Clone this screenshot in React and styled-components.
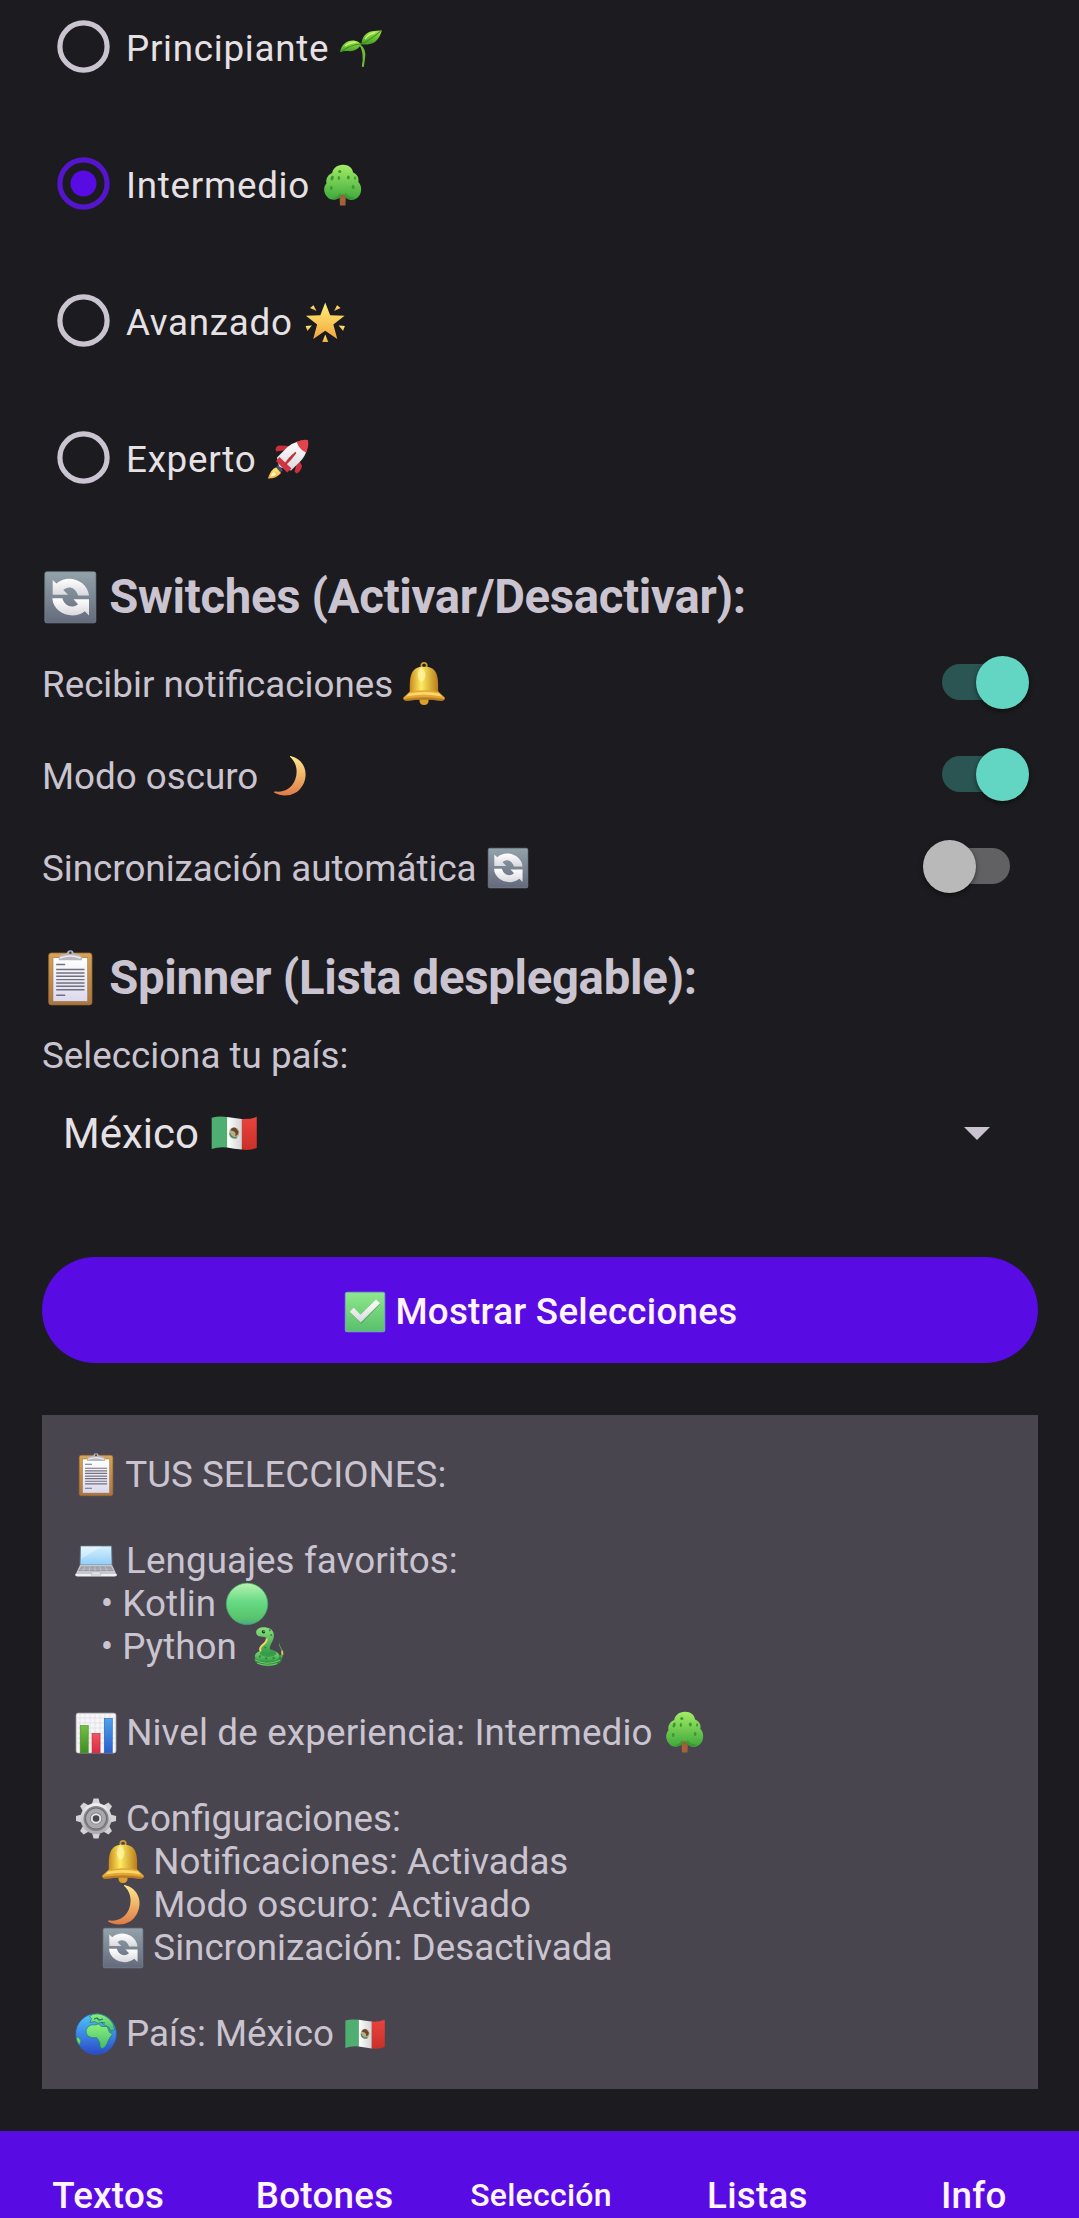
import React, { useState } from "react";
import styled, { createGlobalStyle, css } from "styled-components";

const color = {
  background: "#1c1b1f",
  card: "#49454f",
  primary: "#580be2",
  onPrimary: "#fff4ff",
  text: "#cac4d0",
  textStrong: "#e6e1e5",
  teal: "#62d6c3",
  tealTrack: "#2b5552",
  greyThumb: "#b9b9b9",
  greyTrack: "#616063",
};

const GlobalStyle = createGlobalStyle`
  *, *::before, *::after { box-sizing: border-box; }
  body {
    margin: 0;
    background: ${color.background};
    color: ${color.text};
    font-family: Roboto, "Noto Sans", sans-serif;
    font-size: 36.75px;
    line-height: 43px;
    overflow: hidden;
  }
  button { font: inherit; border: 0; cursor: pointer; }
`;

/* ---------- Emoji drawings, all on a 44 x 44 grid ---------- */

const EmojiSvg = styled.svg`
  display: inline-block;
  width: 1.2em;
  height: 1.2em;
  margin: -0.25em -0.02em -0.27em 0;
  overflow: visible;
`;

const GradientStore = styled.svg`
  position: absolute;
  width: 0;
  height: 0;
`;

const gradients = {
  leaf: ["#a5e84f", "#3f9c22"],
  tree: ["#a4ec66", "#3da83b"],
  star: ["#fff27a", "#f3a63c"],
  slate: ["#93a2ab", "#646a7c"],
  white: ["#ffffff", "#d9d8dd"],
  moon: ["#ffe98a", "#df7b45"],
  wood: ["#d9a456", "#a8753f"],
  paper: ["#ffffff", "#dcd8ee"],
  check: ["#8fe88c", "#57bf6b"],
  screen: ["#d8f1ff", "#8fcdf8"],
  snake: ["#8ae07c", "#2f9a47"],
  barGreen: ["#72c043", "#3f8c22"],
  barRed: ["#f4545c", "#d92c4a"],
  barBlue: ["#4da3ea", "#2a5fd0"],
  gear: ["#f1f1f2", "#a9a9ae"],
  sea: ["#4fc7fb", "#2a49c8"],
  land: ["#8df07c", "#43b96f"],
  flagRed: ["#e9433c", "#c93029"],
};

function Gradients() {
  return (
    <GradientStore aria-hidden="true">
      <defs>
        {Object.entries(gradients).map(([id, [top, bottom]]) => (
          <linearGradient key={id} id={`g-${id}`} x1="0" y1="0" x2="0" y2="1">
            <stop offset="0" stopColor={top} />
            <stop offset="1" stopColor={bottom} />
          </linearGradient>
        ))}
        <linearGradient id="g-circle" x1="0" y1="0" x2="0" y2="1">
          <stop offset="0" stopColor="#b8f3b2" />
          <stop offset="0.45" stopColor="#66da84" />
          <stop offset="0.85" stopColor="#57c46c" />
          <stop offset="1" stopColor="#48a88c" />
        </linearGradient>
        <linearGradient id="g-flagWhite">
          <stop offset="0" stopColor="#ffffff" />
          <stop offset="1" stopColor="#d4d2d4" />
        </linearGradient>
        <linearGradient id="g-bell">
          <stop offset="0" stopColor="#c98a1c" />
          <stop offset="0.4" stopColor="#ffec62" />
          <stop offset="1" stopColor="#b87b18" />
        </linearGradient>
      </defs>
    </GradientStore>
  );
}

const fill = (id) => `url(#g-${id})`;

const drawings = {
  seedling: (
    <>
      <path d="M21 17.2Q27.6 22 26 31L24.8 39.6Q23.4 40.4 22.8 39.2Q25.4 26 20.4 18Z" fill="#6fbd35" />
      <path d="M1 25.3C2 17.500 8 13 15 13.500Q19 13.700 22 17C20 22 14.500 24.800 9 24Q4.500 23.500 1 25.300Z" fill={fill("leaf")} />
      <path d="M22.500 17.300C22.500 10 27 5.200 33 4.200Q38 3.300 42.700 3.400C41.500 8 38.500 15 32 16.700Q27 18 22.500 17.300Z" fill={fill("leaf")} />
      <path d="M2 24.500Q11 18 22 17Q31 13.500 41.500 4.200" fill="none" stroke="#3f8f20" strokeWidth="1" />
      <path d="M6 19Q11 15 17 15.200M26 12Q29 7 36 5.500" fill="none" stroke="#c7f47a" strokeWidth="1.400" />
    </>
  ),
  tree: (
    <g transform="translate(1.700 0) scale(.95 1)">
      <path d="M18.500 28H25.500L25 41.500H19.200Z" fill="#a4603a" />
      <path d="M22 .8C28 .6 32.500 4 33 8.500C37.500 10.200 39.500 14 38.500 18C42.500 21.500 42.300 29 38.800 32.500C35.500 36.500 29 37 25.800 34L22 29.500L18.400 34C14 37 8 36 5.500 32.500C1.800 28.500 1.700 22.500 5 19.500C4 15 6.500 10.500 11 9C12 3.800 16.500 1 22 .8Z" fill={fill("tree")} />
      <path d="M12 34Q16 34 19 29L22 33L25 29Q29 34 35 33Q30 38 25.500 34L22 31L18.500 34Q15 36 12 34Z" fill="#34862c" opacity=".5" />
      <g fill="#3e9a2f">
        <ellipse cx="19" cy="7.500" rx="1.700" ry="1.500" />
        <ellipse cx="11" cy="14" rx="1.600" ry="2.500" transform="rotate(20 11 14)" />
        <ellipse cx="28" cy="13.500" rx="1.500" ry="2" />
        <ellipse cx="18" cy="14" rx="1.200" ry="2" />
        <ellipse cx="33" cy="23" rx="1.500" ry="2" />
        <ellipse cx="10" cy="24" rx="1.500" ry="2" />
        <ellipse cx="35" cy="14" rx="1" ry="1.700" />
      </g>
    </g>
  ),
  star: (
    <>
      <path d="M22.200 1.400L27.100 14.200L41.500 14.600L30.300 23.500L34.200 37.800L22.200 29.700L10.200 37.800L14.100 23.500L2.900 14.600L17.300 14.200Z" fill={fill("star")} />
      <g fill={fill("star")}>
        <path d="M7 7L10.500 4.200L13.500 10Z" />
        <path d="M37.500 7L34 4.200L31 10Z" />
        <path d="M2.600 25L8.800 24.400L4.400 30Z" />
        <path d="M41.800 25L35.600 24.400L40 30Z" />
        <path d="M22.200 33.500L25.200 41H19.200Z" />
      </g>
    </>
  ),
  rocket: (
    <>
      <path d="M21 12L10 13.500Q8.500 8.500 13 7.500L25 8Z" fill="#c8303e" />
      <path d="M33 22L36 28Q34.500 34 30.500 35.500L28.500 33.500L31 24Z" fill="#c8303e" />
      <path d="M11 19.500L21 9.500Q26 5 32 3.500L40.500 12Q39.500 17.500 35 22.500L25 32.500L13 29Z" fill={fill("white")} />
      <path d="M30.500 3.800Q37 1 41.800 2Q43.200 8 40 14.500Q33.500 12 30.500 3.800Z" fill="#e2434c" />
      <path d="M13.500 19L25.500 30.500L21 34.500L10 23Z" fill="#d23443" />
      <path d="M12 27L17 32L14.500 34.500L9.500 30Z" fill="#4c4c68" />
      <path d="M10 29.500Q5 31 1.800 40.500Q10 41 15 35Z" fill={fill("star")} />
      <path d="M7.500 34Q5.500 35.500 4.200 38.600Q8 38.600 10.500 36.500Z" fill="#fff7c8" />
      <path d="M18 26.500Q22 19.500 29.500 13.800Q30.500 14 30 15.500Q25.500 22 19.500 27.500Q17.500 28.500 18 26.500Z" fill="#c1343e" />
    </>
  ),
  refresh: (
    <>
      <rect x="2.200" y="2.200" width="39.600" height="39.600" rx="1.500" fill={fill("slate")} stroke="#78868f" strokeWidth=".6" />
      <path d="M8.300 8.500V20H20.300L16.500 16.300C20.500 12.700 25.800 14 28 20.500H36.500C35.500 9 20 3.200 11.200 11.200Z" fill={fill("white")} />
      <path d="M36.500 36V23.500H24.500L28 27.300C24 30.800 17.800 29.500 15.800 22.800H8C8.600 34.500 24 40.200 33.200 32.800Z" fill={fill("white")} />
    </>
  ),
  bell: (
    <>
      <circle cx="22" cy="3.600" r="2.700" fill="none" stroke="#cf9b37" strokeWidth="1.700" />
      <path d="M17.500 37H26.500Q27 43 22 43Q17 43 17.500 37Z" fill="#dba030" />
      <path d="M7.800 30C8 20 6.500 6.500 19 4.800H25C37.500 6.500 36 20 36.200 30Z" fill={fill("bell")} />
      <path d="M7.600 29.800Q22 26.500 36.400 29.800L42.600 35.500Q43.500 38.500 39 38.700Q22 36 5 38.700Q.5 38.500 1.400 35.500Z" fill="#e3a633" />
      <path d="M7 31.500Q22 28 37 31.500L40 34.500Q22 31 4 34.500Z" fill="#ffe376" opacity=".8" />
      <path d="M2 37Q22 33.500 42 37Q42 39 39 38.800Q22 36.500 5 38.800Q2 39 2 37Z" fill="#a66c22" opacity=".7" />
      <ellipse cx="19.500" cy="13" rx="3.800" ry="6.500" fill="#fff9b0" opacity=".65" />
    </>
  ),
  moon: (
    <path d="M23.500 2C37 5 42.500 19 35.500 31.500C29.500 42 16.500 44 7 38.500Q6.500 37.200 8.500 37.500C18 38.500 25.500 33.500 28.300 25C31.200 16 29 8.500 23 2.800Q22.500 1.900 23.500 2Z" fill={fill("moon")} />
  ),
  clipboard: (
    <>
      <rect x="5.200" y="2.300" width="33.600" height="40.300" rx="2" fill={fill("wood")} stroke="#9b6a34" strokeWidth=".6" />
      <rect x="8.500" y="6" width="27" height="34" fill={fill("paper")} stroke="#9d7445" strokeWidth=".5" />
      <path d="M13 8V5.800Q14 3.500 17.500 3.200L19.500 2.500Q19.500 .2 22 .2Q24.500 .2 24.500 2.500L26.500 3.200Q30 3.500 31 5.800V8Z" fill="#b7b7bd" />
      <path d="M14 6.200Q22 3 30 6.200" fill="none" stroke="#ececf0" strokeWidth="1.200" />
      <circle cx="22" cy="2.200" r="1" fill="#44424c" />
      <g stroke="#71717e" strokeWidth="1.150">
        <path d="M11 11.200H18M11 15.200H33M11 17.800H33M11 20.400H33M11 23H33M11 25.600H33M11 28.200H33M11 30.800H33M11 35.200H18" />
      </g>
    </>
  ),
  flag: (
    <g transform="translate(.900 .600) scale(.96 .94)">
      <path d="M1.500 8.500Q8 6.500 15.500 7.700V36Q8 35 1.500 37.500Z" fill="#4fae72" />
      <path d="M15.500 7.700Q22 8.800 29 9.500V38Q22 37.200 15.500 36Z" fill={fill("flagWhite")} />
      <path d="M29 9.500Q36 10 42.500 7.600V36.500Q36 39 29 38Z" fill={fill("flagRed")} />
      <ellipse cx="22" cy="22.500" rx="4.600" ry="5.300" fill="#b9ad86" />
      <path d="M18.500 20Q20 16.500 23.500 18L26 21.500Q25.500 25 22.800 25.500Q24 22 21.500 21Z" fill="#68452d" />
      <path d="M18 23Q19.500 28 24.500 26.800" fill="none" stroke="#4f8c67" strokeWidth="1.500" />
    </g>
  ),
  check: (
    <>
      <rect x="2.300" y="2.300" width="39.400" height="39.400" rx="2" fill={fill("check")} stroke="#78a8c8" strokeWidth="1" />
      <path d="M7.500 22.800L11.300 19.200L17.800 26L33.700 10.200L37.300 14L18.200 33.600Z" fill="#3a9550" opacity=".6" />
      <path d="M6.700 21.600L10.700 17.800L17.500 24.600L33 9.500L37 13.200L17.700 32.500Z" fill={fill("white")} />
    </>
  ),
  laptop: (
    <>
      <path d="M6.500 7H37.500L38 26H6Z" fill={fill("screen")} stroke="#69747f" strokeWidth=".8" />
      <path d="M7 7.500H28L7 20Z" fill="#fff" opacity=".35" />
      <path d="M6 26H38L42.500 35.500H1.500Z" fill="#c7c7ce" />
      <path d="M7 27.500H37L39.500 32H4.500Z" fill="#8d8d98" />
      <path d="M6.500 29H37.500M5.500 30.700H38.500M11 27.500L9 32M16 27.500L15 32M21 27.500V32M26 27.500L27 32M31 27.500L33 32" fill="none" stroke="#d3d3da" strokeWidth=".6" />
      <path d="M1.300 35H42.700V36.500Q42 37.500 40 37.500H4Q2 37.500 1.300 36.500Z" fill="#efeff2" />
      <path d="M18 32.800H26L27 36H17Z" fill="#e2e2e7" stroke="#a2a2aa" strokeWidth=".5" />
    </>
  ),
  circle: <circle cx="22" cy="21.800" r="20.700" fill={fill("circle")} stroke="#45a868" strokeWidth=".7" />,
  snake: (
    <g transform="translate(2 1.500) scale(.91 .95)">
      <path d="M30 33Q39 31 36.500 24.500Q33.500 20 34 17Q35.500 21.500 38 25Q40 31 35 36Z" fill="#4cae52" />
      <path d="M36.500 25L38.500 26L38.700 30L36.500 29Z" fill="#e9c558" />
      <ellipse cx="22" cy="34.500" rx="15" ry="7.300" fill="#2f8c3f" />
      <ellipse cx="21" cy="31" rx="13.500" ry="6.500" fill={fill("snake")} />
      <ellipse cx="22" cy="28" rx="9" ry="4" fill="#3b9c46" />
      <path d="M9 7C8 2 15 0 20 1C29 2 30 10 26.500 16C23.500 21 22.500 25 27 28C22 31.500 13 28 12.500 24C12.500 19 21 16 20.500 12.500Q19 10.500 14 10.500Q9.500 10 9 7Z" fill={fill("snake")} />
      <path d="M20.500 12.500Q21 16 16 19.500Q12 23 14 26" fill="none" stroke="#f0d361" strokeWidth="2.200" />
      <circle cx="17" cy="5.500" r="1.900" fill="#173d24" />
      <circle cx="17.500" cy="4.900" r=".6" fill="#fff" />
      <path d="M8 35Q20 42 35 35.500M10 38.500Q21 42.500 32 39" fill="none" stroke="#81cf6f" strokeWidth="1" />
      <g fill="#2c8640">
        <circle cx="24" cy="4" r="1.100" />
        <circle cx="25.500" cy="9" r="1.100" />
        <circle cx="19" cy="22" r="1.100" />
        <circle cx="13" cy="31.500" r="1.200" />
        <circle cx="20" cy="33.500" r="1.200" />
        <circle cx="28" cy="33" r="1.200" />
      </g>
    </g>
  ),
  chart: (
    <>
      <rect x="2.200" y="2.200" width="39.600" height="39.600" rx="2" fill="#f6f6f8" stroke="#c9c8cd" strokeWidth=".8" />
      <path d="M6 2V42M11 2V42M16 2V42M21 2V42M26 2V42M31 2V42M36 2V42M2 7H42M2 12H42M2 17H42M2 22H42M2 27H42M2 32H42" stroke="#d9d9df" strokeWidth=".6" />
      <rect x="6.200" y="14.500" width="8" height="27.300" fill={fill("barGreen")} stroke="#4a8a2a" strokeWidth=".6" />
      <rect x="18" y="22.500" width="8" height="19.300" fill={fill("barRed")} stroke="#b02840" strokeWidth=".6" />
      <rect x="30.200" y="7.500" width="8" height="34.300" fill={fill("barBlue")} stroke="#2c5fb0" strokeWidth=".6" />
    </>
  ),
  gear: (
    <>
      <g fill={fill("gear")}>
        {[0, 45, 90, 135].map((angle) => (
          <path key={angle} d="M19.500 1.500H24.500L26.500 9V34L24.500 41.500H19.500L17.500 34V9Z" transform={`rotate(${angle} 22 21.500)`} fill="#d3d3d6" />
        ))}
        <circle cx="22" cy="21.500" r="15.500" />
      </g>
      <circle cx="22" cy="21.500" r="12.500" fill="#87878b" />
      <circle cx="22" cy="21.500" r="10.500" fill="#a9a9ad" stroke="#6d6d72" strokeWidth="1" />
      <circle cx="22" cy="21.500" r="6" fill="#77777b" />
      <circle cx="22" cy="21.500" r="4.300" fill="#4b4750" stroke="#e4e4e7" strokeWidth="2" />
    </>
  ),
  globe: (
    <>
      <circle cx="22" cy="22" r="20.300" fill={fill("sea")} stroke="#275fca" strokeWidth=".6" />
      <g fill={fill("land")} stroke="#247b6e" strokeWidth=".7">
        <path d="M13.500 15.500Q16 12 21 13L24.500 12L27.500 14.500L33 14.500L35.500 20.500L38.500 22Q35.500 25.500 34 29Q32 35.500 28 36.500Q25.500 36 25.800 31Q24.500 27.500 22.500 25.500Q17 26.500 13.500 23.500Q10.500 19.500 13.500 15.500Z" />
        <path d="M16 10.500L17.500 6.500L15.500 4.500L19 2.300Q25 .9 30 3.500Q36 6.200 39 12L40.500 18L36.500 19L34.500 15L29.500 12.500L27 10L24 11.500L20.500 9.500Z" />
        <path d="M2.200 25Q5.500 25 7 29Q6.500 32 5 33Q2.600 29.500 2.200 25Z" />
      </g>
      <path d="M20 7L23 6L25 8L29 7M27 10.500L31 11" fill="none" stroke="#24746c" strokeWidth="1.200" />
    </>
  ),
};

function Emoji({ name }) {
  return (
    <EmojiSvg viewBox="0 0 44 44" aria-hidden="true">
      {drawings[name]}
    </EmojiSvg>
  );
}

/* ---------- Layout ---------- */

const Screen = styled.div`
  display: flex;
  flex-direction: column;
  width: 1079px;
  height: 2218px;
  overflow: hidden;
`;

const Content = styled.main`
  display: flex;
  flex: 1;
  flex-direction: column;
  min-height: 0;
  padding: 0 41px 0 42px;
`;

const RadioGroup = styled.div`
  display: flex;
  flex-direction: column;
  margin-top: -22px;
`;

const RadioRow = styled.button`
  display: flex;
  align-items: center;
  gap: 16px;
  height: 137px;
  padding: 0 0 0 15px;
  background: none;
  color: ${color.textStrong};
  text-align: left;
`;

const RadioRing = styled.svg`
  flex: none;
  width: 53px;
  height: 53px;
`;

const RadioLabel = styled.span`
  padding-top: 4px;
  letter-spacing: 0.74px;
`;

const Heading = styled.h2`
  margin: ${(p) => p.$top}px 0 0;
  font-size: 47.250px;
  line-height: 55px;
  font-weight: 700;
  letter-spacing: -0.28px;
`;

const SwitchList = styled.div`
  display: flex;
  flex-direction: column;
  margin-top: 11px;
`;

const SwitchRow = styled.div`
  display: flex;
  align-items: center;
  justify-content: space-between;
  height: 92px;
  padding-right: 28px;
`;

const SwitchLabel = styled.span`
  padding-top: 4px;
`;

const Track = styled.button`
  display: flex;
  align-items: center;
  width: 68px;
  height: 36px;
  padding: 0;
  border-radius: 18px;
  background: ${color.greyTrack};
  ${(p) =>
    p.$on &&
    css`
      justify-content: flex-end;
      background: ${color.tealTrack};
    `}
`;

const Thumb = styled.span`
  flex: none;
  width: 53px;
  height: 53px;
  margin: 0 -19px;
  border-radius: 50%;
  background: ${(p) => (p.$on ? color.teal : color.greyThumb)};
  box-shadow: 0 2px 5px rgba(0, 0, 0, 0.5);
`;

const FieldLabel = styled.label`
  margin-top: 28px;
`;

const Spinner = styled.button`
  display: flex;
  align-items: center;
  justify-content: space-between;
  height: 112px;
  padding: 0 48px 0 21px;
  background: none;
  color: ${color.textStrong};
  font-size: 42px;
  text-align: left;
`;

const Caret = styled.svg`
  width: 26px;
  height: 13px;
`;

const PrimaryButton = styled.button`
  height: 106px;
  margin-top: 68px;
  padding: 3px 0 0;
  border-radius: 53px;
  background: ${color.primary};
  color: ${color.onPrimary};
  font-weight: 500;
  letter-spacing: 0.26px;
`;

const Card = styled.section`
  height: 674px;
  margin-top: 52px;
  padding: 38px 31.500px 0;
  background: ${color.card};
`;

const Line = styled.div`
  height: 43px;
  white-space: pre;
  letter-spacing: ${(p) => p.$tracking || "normal"};
`;

const BottomNav = styled.nav`
  display: grid;
  grid-template-columns: repeat(5, 216.400px);
  flex: none;
  height: 87px;
  background: ${color.primary};
`;

const NavItem = styled.button`
  padding: 42px 0 0;
  background: none;
  color: ${color.onPrimary};
  font-size: ${(p) => (p.$compact ? 32 : 36.75)}px;
  line-height: 43px;
  font-weight: 500;
  letter-spacing: 0.26px;
`;

/* ---------- Data ---------- */

const levels = [
  { label: "Principiante", emoji: "seedling" },
  { label: "Intermedio", emoji: "tree" },
  { label: "Avanzado", emoji: "star" },
  { label: "Experto", emoji: "rocket" },
];

const settings = [
  { label: "Recibir notificaciones", emoji: "bell" },
  { label: "Modo oscuro", emoji: "moon" },
  { label: "Sincronización automática", emoji: "refresh" },
];

const summary = [
  { emoji: "clipboard", text: " TUS SELECCIONES:" },
  {},
  { emoji: "laptop", text: " Lenguajes favoritos:", tracking: "0.1px" },
  { before: "   • Kotlin ", emoji: "circle" },
  { before: "   • Python ", emoji: "snake" },
  {},
  { emoji: "chart", text: " Nivel de experiencia: Intermedio ", trailing: "tree", tracking: "0.16px" },
  {},
  { emoji: "gear", text: " Configuraciones:" },
  { before: "   ", emoji: "bell", text: " Notificaciones: Activadas" },
  { before: "   ", emoji: "moon", text: " Modo oscuro: Activado" },
  { before: "   ", emoji: "refresh", text: " Sincronización: Desactivada" },
  {},
  { emoji: "globe", text: " País: México ", trailing: "flag" },
];

const tabs = ["Textos", "Botones", "Selección", "Listas", "Info"];

function Radio({ label, emoji, checked, onSelect }) {
  const stroke = checked ? "#5415cc" : color.text;
  return (
    <RadioRow type="button" role="radio" aria-checked={checked} onClick={onSelect}>
      <RadioRing viewBox="0 0 53 53">
        <circle cx="26.500" cy="26.500" r="23.600" fill="none" stroke={stroke} strokeWidth="5.200" />
        {checked && <circle cx="26.500" cy="26.500" r="13" fill={color.primary} />}
      </RadioRing>
      <RadioLabel>
        {label} <Emoji name={emoji} />
      </RadioLabel>
    </RadioRow>
  );
}

export default function App() {
  const [level, setLevel] = useState(1);
  const [enabled, setEnabled] = useState([true, true, false]);
  const toggle = (index) => setEnabled(enabled.map((on, i) => (i === index ? !on : on)));

  return (
    <Screen>
      <GlobalStyle />
      <Gradients />
      <Content>
        <RadioGroup role="radiogroup">
          {levels.map((item, i) => (
            <Radio key={item.label} {...item} checked={level === i} onSelect={() => setLevel(i)} />
          ))}
        </RadioGroup>

        <Heading $top={44}>
          <Emoji name="refresh" /> Switches (Activar/Desactivar):
        </Heading>
        <SwitchList>
          {settings.map((item, i) => (
            <SwitchRow key={item.label}>
              <SwitchLabel>
                {item.label} <Emoji name={item.emoji} />
              </SwitchLabel>
              <Track type="button" role="switch" aria-checked={enabled[i]} $on={enabled[i]} onClick={() => toggle(i)}>
                <Thumb $on={enabled[i]} />
              </Track>
            </SwitchRow>
          ))}
        </SwitchList>

        <Heading $top={39}>
          <Emoji name="clipboard" /> Spinner (Lista desplegable):
        </Heading>
        <FieldLabel>Selecciona tu país:</FieldLabel>
        <Spinner type="button">
          <span>
            México <Emoji name="flag" />
          </span>
          <Caret viewBox="0 0 26 13">
            <path d="M0 0H26L13 13Z" fill={color.text} />
          </Caret>
        </Spinner>

        <PrimaryButton type="button">
          <Emoji name="check" /> Mostrar Selecciones
        </PrimaryButton>

        <Card>
          {summary.map((line, i) => (
            <Line key={i} $tracking={line.tracking}>
              {line.before}
              {line.emoji && <Emoji name={line.emoji} />}
              {line.text}
              {line.trailing && <Emoji name={line.trailing} />}
            </Line>
          ))}
        </Card>
      </Content>
      <BottomNav>
        {tabs.map((tab) => (
          <NavItem key={tab} type="button" $compact={tab === "Selección"}>
            {tab}
          </NavItem>
        ))}
      </BottomNav>
    </Screen>
  );
}
